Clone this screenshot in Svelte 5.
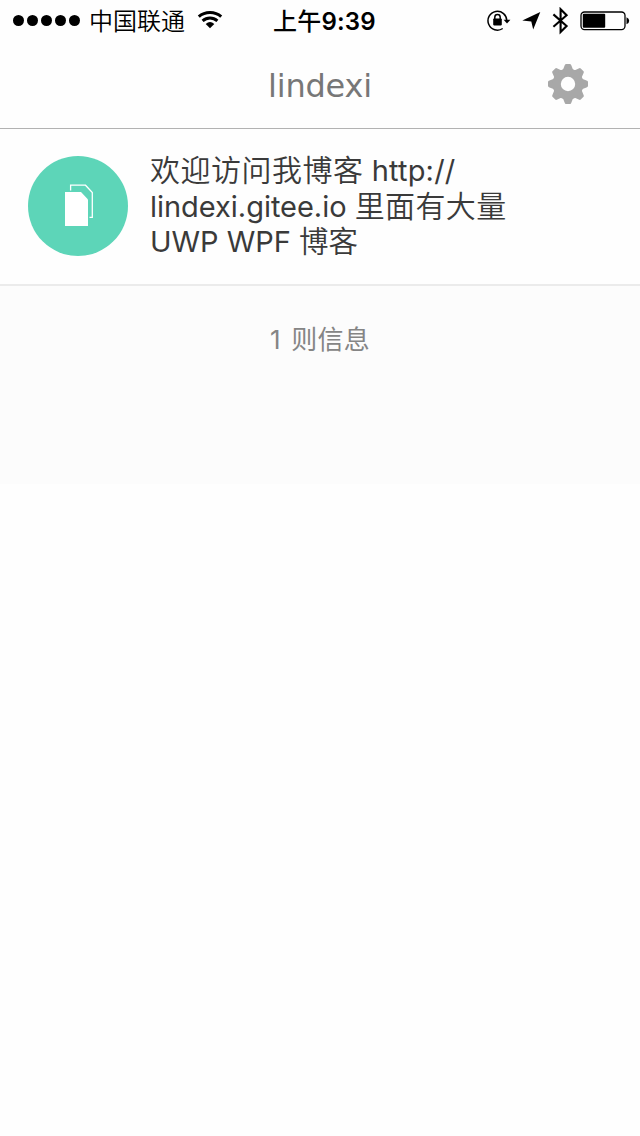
<script>
  let { name = 'lindexi' } = $props();

  const signal = [1, 2, 3, 4, 5];
  const teeth = [0, 45, 90, 135, 180, 225, 270, 315];
</script>

<div class="screen">
  <div class="status">
    <div class="left">
      <div class="dots">
        {#each signal as dot (dot)}
          <i></i>
        {/each}
      </div>
      <span class="carrier">中国联通</span>
      <svg class="wifi" width="26" height="20" viewBox="0 0 26 20">
        <g fill="none" stroke="#000" stroke-width="3">
          <path d="M1.8 6.7C8 1.2 18 1.2 24.2 6.7" />
          <path d="M5.6 10.8C10 6.9 16 6.9 20.4 10.8" />
        </g>
        <path d="M8.7 13.9Q13 10.3 17.3 13.9L13 18.2Z" />
      </svg>
    </div>
    <span class="time"><span class="am">上午</span>9:39</span>
    <div class="right">
      <svg class="lock" width="24" height="24" viewBox="0 0 24 24">
        <path d="M15.7 19.5A9.4 9.4 0 1 1 19.8 12" fill="none" stroke="#000" stroke-width="1.5" />
        <path d="M16.6 10.7H23.4L20 14.6Z" />
        <rect x="6.2" y="9.5" width="8.6" height="6.9" rx=".8" />
        <path d="M7.8 10.5V8.2a2.7 2.7 0 0 1 5.4 0V10.5" fill="none" stroke="#000" stroke-width="1.5" />
      </svg>
      <svg class="arrow" width="20" height="20" viewBox="0 0 20 20">
        <path d="M18.3 1L11.2 18.6L9.3 10.6L.3 9.4Z" />
      </svg>
      <svg class="bluetooth" width="18" height="28" viewBox="0 0 18 28">
        <path d="M1.4 7.4L14.6 19L8.6 25V2.2L14.6 8.2L1.4 19.8" fill="none" stroke="#000" stroke-width="2.1" />
      </svg>
      <svg class="battery" width="50" height="20" viewBox="0 0 50 20">
        <rect x="1" y="1" width="44" height="17.6" rx="3.5" fill="none" stroke="#000" stroke-width="1.3" />
        <rect x="2.8" y="2.8" width="22.4" height="14" rx="1" />
        <path d="M46.5 6.3Q49.2 7.3 49.2 9.8T46.5 13.3Z" />
      </svg>
    </div>
  </div>

  <header>
    <h1>{name}</h1>
    <svg class="gear" width="40" height="40" viewBox="-20 -20 40 40">
      <g fill="#a8a8a8">
        {#each teeth as angle (angle)}
          <path d="M-7 -12Q-4.2 -15 -3.4 -18.5Q-3 -20 -2 -20H2Q3 -20 3.4 -18.5Q4.2 -15 7 -12Z" transform="rotate({angle})" />
        {/each}
      </g>
      <circle r="11.3" fill="none" stroke="#a8a8a8" stroke-width="8.2" />
    </svg>
  </header>

  <main>
    <article>
      <div class="avatar">
        <svg width="100" height="100" viewBox="0 0 100 100">
          <path d="M42.6 34.5V29.2H57.5L64.3 36.5V61.3H61.5" fill="none" stroke="#fff" stroke-width="1.3" />
          <path d="M37 36H53L60 43.5V70H37Z" fill="#fff" />
        </svg>
      </div>
      <p>
        <span class="han wide">欢迎访问我博客</span> <span class="url">http://</span><br />
        lindexi.gitee.io <span class="han">里面有大量</span><br />
        UWP WPF <span class="han narrow">博客</span>
      </p>
    </article>
    <footer>1 则信息</footer>
  </main>
</div>

<style>
  :global(body) {
    margin: 0;
    background: #fff;
  }

  .screen {
    min-height: 1136px;
    background: #fefefe;
    font-family: Inter, 'Noto Sans CJK SC', sans-serif;
  }

  .status {
    display: grid;
    grid-template-rows: 40px;
    grid-template-columns: 1fr 110px 1fr;
    color: #000;
  }

  .left,
  .right {
    display: flex;
    align-items: center;
  }

  .left {
    padding-left: 13px;
  }

  .dots {
    display: flex;
    gap: 3px;
  }

  .dots i {
    width: 11px;
    height: 11px;
    border-radius: 50%;
    background: #000;
  }

  .carrier {
    margin-left: 9px;
    padding-top: 3px;
    font-size: 24px;
    font-weight: 350;
    line-height: 37px;
  }

  .wifi {
    margin-left: 12px;
  }

  .time {
    padding-left: 8px;
    font-size: 24px;
    font-weight: 600;
    letter-spacing: 0.2px;
    line-height: 43px;
    text-align: center;
    white-space: nowrap;
  }

  .am {
    font-weight: 500;
  }

  .right {
    justify-content: flex-end;
    padding-top: 1px;
    padding-right: 10px;
  }

  .arrow {
    margin-left: 11px;
  }

  .bluetooth {
    margin-left: 10px;
  }

  .battery {
    margin-left: 10px;
  }

  header {
    display: grid;
    grid-template-columns: 1fr auto 1fr;
    align-items: center;
    height: 88px;
    border-bottom: 1px solid #b2b2b2;
  }

  h1 {
    grid-column: 2;
    margin: 0;
    padding-top: 3px;
    color: #777;
    font: 32px 'DejaVu Sans', sans-serif;
    letter-spacing: -0.2px;
  }

  .gear {
    justify-self: end;
    margin-right: 52px;
  }

  main {
    height: 355px;
    background: #fcfcfc;
  }

  article {
    display: flex;
    height: 155px;
    padding-left: 28px;
    border-bottom: 2px solid #ebebeb;
    background: #fefefe;
  }

  .avatar {
    width: 100px;
    height: 100px;
    margin-top: 27px;
    border-radius: 50%;
    background: #5dd5b8;
  }

  p {
    margin: 24px 0 0 22px;
    color: #3a3a3a;
    font-size: 29px;
    letter-spacing: -0.03px;
    line-height: 35.5px;
    white-space: nowrap;
  }

  .han {
    font-size: 30px;
    font-weight: 350;
    letter-spacing: 0.4px;
    line-height: 1;
  }

  .wide {
    letter-spacing: 0.5px;
  }

  .narrow {
    font-size: 29.5px;
    letter-spacing: 0;
  }

  .url {
    letter-spacing: 0.2px;
  }

  footer {
    margin-top: 33px;
    color: #858585;
    font-size: 26px;
    letter-spacing: 0.2px;
    line-height: 42px;
    text-align: center;
    word-spacing: 3px;
  }
</style>
